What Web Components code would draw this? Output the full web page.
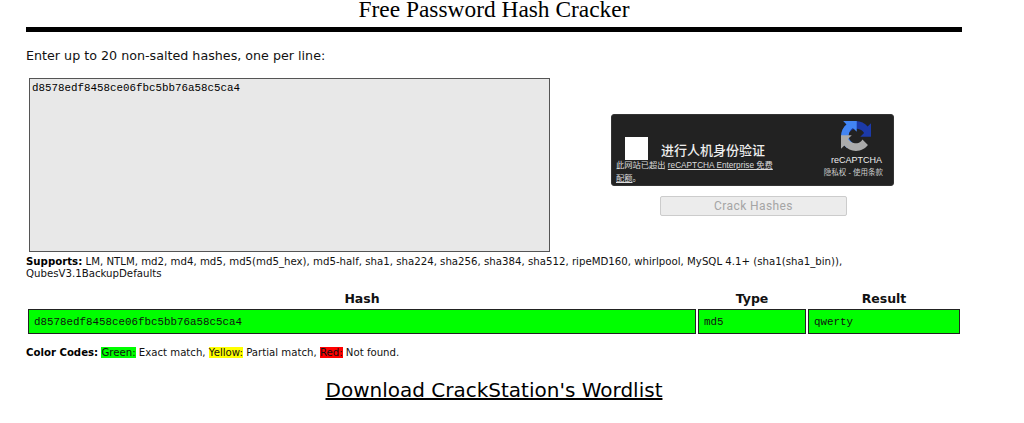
<!DOCTYPE html>
<html lang="en">
<head>
<meta charset="utf-8">
<title>Free Password Hash Cracker</title>
<style>
  html, body { margin: 0; background: #fff; overflow: hidden; }
  body { font-family: "DejaVu Sans", Verdana, sans-serif; color: #111; }
</style>
</head>
<body>
<crack-page>
  <page-heading>Free Password Hash Cracker</page-heading>
  <hash-form>Enter up to 20 non-salted hashes, one per line:</hash-form>
  <supports-note></supports-note>
  <result-table></result-table>
  <color-codes></color-codes>
  <download-link>Download CrackStation's Wordlist</download-link>
</crack-page>

<script>
// small helper so every element below stays short
class ShadowBase extends HTMLElement {
  constructor(html) {
    super();
    this.attachShadow({ mode: 'open' });
    this.shadowRoot.innerHTML = html;
  }
}

class CrackPage extends ShadowBase {
  constructor() {
    super(`
      <style>
        :host { display: block; width: 936px; height: 423px; margin-left: 26px; }
      </style>
      <slot></slot>`);
  }
}

class PageHeading extends ShadowBase {
  constructor() {
    super(`
      <style>
        :host { display: block; }
        h1 { margin: 0; height: 27px; font: 400 23.4px/18px "Liberation Serif", "Times New Roman", serif; color: #000; text-align: center; }
        hr { margin: 0; height: 5px; border: 0; background: #000; }
      </style>
      <h1><slot></slot></h1>
      <hr>`);
  }
}

class RecaptchaBox extends ShadowBase {
  constructor() {
    super(`
      <style>
        :host { display: block; width: 283px; height: 72px; box-sizing: border-box; position: relative;
          background: #222; border-radius: 3px; border: 1px solid #333; color: #fff; overflow: hidden;
          font-family: "Liberation Sans", "Noto Sans CJK SC", sans-serif; }
        .main { display: flex; align-items: center; gap: 13px; padding: 22px 0 0 13px; }
        .check { width: 23px; height: 23px; background: #fff; flex: none; }
        .label { font-size: 13px; line-height: 16px; font-weight: 500; color: #eee; position: relative; top: 2px; }
        .note { position: absolute; left: 4px; top: 44px; font-size: 8.25px; line-height: 13px; color: #ddd; white-space: nowrap; }
        .brand { position: absolute; right: 10px; top: 6px; width: 66px; text-align: right; }
        .brand svg { display: block; margin: 0 12px 2px auto; }
        .name { font-size: 9px; line-height: 14px; color: #eee; padding-right: 1px; }
        .terms { font-size: 7.5px; line-height: 12px; color: #ccc; }
      </style>
      <div class="main"><span class="check"></span><span class="label">进行人机身份验证</span></div>
      <div class="note">此网站已超出 <u>reCAPTCHA Enterprise 免费</u><br><u>配额</u>。</div>
      <div class="brand">
        <svg width="30" height="30" viewBox="0 0 64 64">
          <path d="M64 31.955l-.033-1.37V4.687l-7.16 7.16C50.948 4.674 42.033.093 32.05.093c-10.4 0-19.622 4.96-25.458 12.64l11.736 11.86a15.55 15.55 0 0 1 4.754-5.334c2.05-1.6 4.952-2.906 9.968-2.906.606 0 1.074.07 1.417.2 6.2.49 11.608 3.91 14.8 8.9l-8.3 8.3c10.524-.04 22.413-.066 23.02.012" fill="#1c3aa9"/>
          <path d="M31.862.094l-1.37.033H4.594l7.16 7.16C4.58 13.147 0 22.06 0 32.046c0 10.4 4.96 19.622 12.64 25.458L24.5 45.768a15.55 15.55 0 0 1-5.334-4.754c-1.6-2.05-2.906-4.952-2.906-9.968 0-.606.07-1.074.2-1.417.49-6.2 3.91-11.608 8.9-14.8l8.3 8.3c-.04-10.524-.066-22.413.012-23.02" fill="#4285f4"/>
          <path d="M.001 32.045l.033 1.37v25.898l7.16-7.16c5.86 7.173 14.774 11.754 24.76 11.754 10.4 0 19.622-4.96 25.458-12.64L45.676 39.406a15.55 15.55 0 0 1-4.754 5.334c-2.05 1.6-4.952 2.906-9.968 2.906-.606 0-1.074-.07-1.417-.2-6.2-.49-11.608-3.91-14.8-8.9l8.3-8.3c-10.524.04-22.413.066-23.02-.012" fill="#ababab"/>
        </svg>
        <div class="name">reCAPTCHA</div>
        <div class="terms">隐私权 - 使用条款</div>
      </div>`);
  }
}

class HashForm extends ShadowBase {
  constructor() {
    super(`
      <style>
        :host { display: block; }
        .intro { margin: 17px 0 15px; font-size: 12.7px; line-height: 14px; }
        .row { display: flex; margin-left: 3px; }
        .hashes { width: 521px; height: 174px; box-sizing: border-box; border: 1px solid #555; background: #e8e8e8;
          padding: 3px 2px; font: 10.83px/13px "Liberation Mono", "Courier New", monospace; color: #000; flex: none; }
        .side { margin: 36px 0 0 61px; }
        .crack { display: block; width: 187px; height: 20px; margin: 10px 0 0 49px; padding: 0; box-sizing: border-box;
          background: #ececec; border: 1px solid #ccc; border-radius: 2px; color: #a5a5a5;
          font: 12px/18px Roboto, "Liberation Sans", sans-serif; letter-spacing: .4px; }
      </style>
      <div class="intro"><slot></slot></div>
      <div class="row">
        <div class="hashes">d8578edf8458ce06fbc5bb76a58c5ca4</div>
        <div class="side">
          <recaptcha-box></recaptcha-box>
          <button class="crack" disabled>Crack Hashes</button>
        </div>
      </div>`);
  }
}

class SupportsNote extends ShadowBase {
  constructor() {
    super(`
      <style>
        :host { display: block; margin-top: 4px; font-size: 10.2px; line-height: 12px; }
        b { color: #000; }
      </style>
      <b>Supports:</b> LM, NTLM, md2, md4, md5, md5(md5_hex), md5-half, sha1, sha224, sha256, sha384, sha512, ripeMD160, whirlpool, MySQL 4.1+ (sha1(sha1_bin)), QubesV3.1BackupDefaults`);
  }
}

class ResultTable extends ShadowBase {
  constructor() {
    super(`
      <style>
        :host { display: grid; grid-template-columns: 668px 108px 152px; column-gap: 2px; margin: 13px 0 0 2px; width: 932px;
          font-size: 12.5px; }
        .head { height: 16px; line-height: 12px; font-weight: 700; text-align: center; color: #111; }
        .cell { height: 25px; box-sizing: border-box; border: 1px solid #222; background: #0f0; padding-left: 5px;
          font: 10.83px/25px "Liberation Mono", "Courier New", monospace; color: #111; }
      </style>
      <div class="head">Hash</div><div class="head">Type</div><div class="head">Result</div>
      <div class="cell">d8578edf8458ce06fbc5bb76a58c5ca4</div><div class="cell">md5</div><div class="cell">qwerty</div>`);
  }
}

class ColorCodes extends ShadowBase {
  constructor() {
    super(`
      <style>
        :host { display: block; margin-top: 13px; font-size: 10.17px; line-height: 12px; }
        b { color: #000; }
        .g, .y, .r { font-weight: 400; }
        .g { background: #0f0; } .y { background: #ff0; } .r { background: #f00; }
      </style>
      <b>Color Codes:</b> <span class="g">Green:</span> Exact match, <span class="y">Yellow:</span> Partial match, <span class="r">Red:</span> Not found.`);
  }
}

class DownloadLink extends ShadowBase {
  constructor() {
    super(`
      <style>
        :host { display: block; margin-top: 19px; text-align: center; font-size: 20px; line-height: 24px; }
        a { color: #000; text-decoration: underline; }
      </style>
      <a href="#"><slot></slot></a>`);
  }
}

customElements.define('crack-page', CrackPage);
customElements.define('page-heading', PageHeading);
customElements.define('recaptcha-box', RecaptchaBox);
customElements.define('hash-form', HashForm);
customElements.define('supports-note', SupportsNote);
customElements.define('result-table', ResultTable);
customElements.define('color-codes', ColorCodes);
customElements.define('download-link', DownloadLink);
</script>
</body>
</html>
